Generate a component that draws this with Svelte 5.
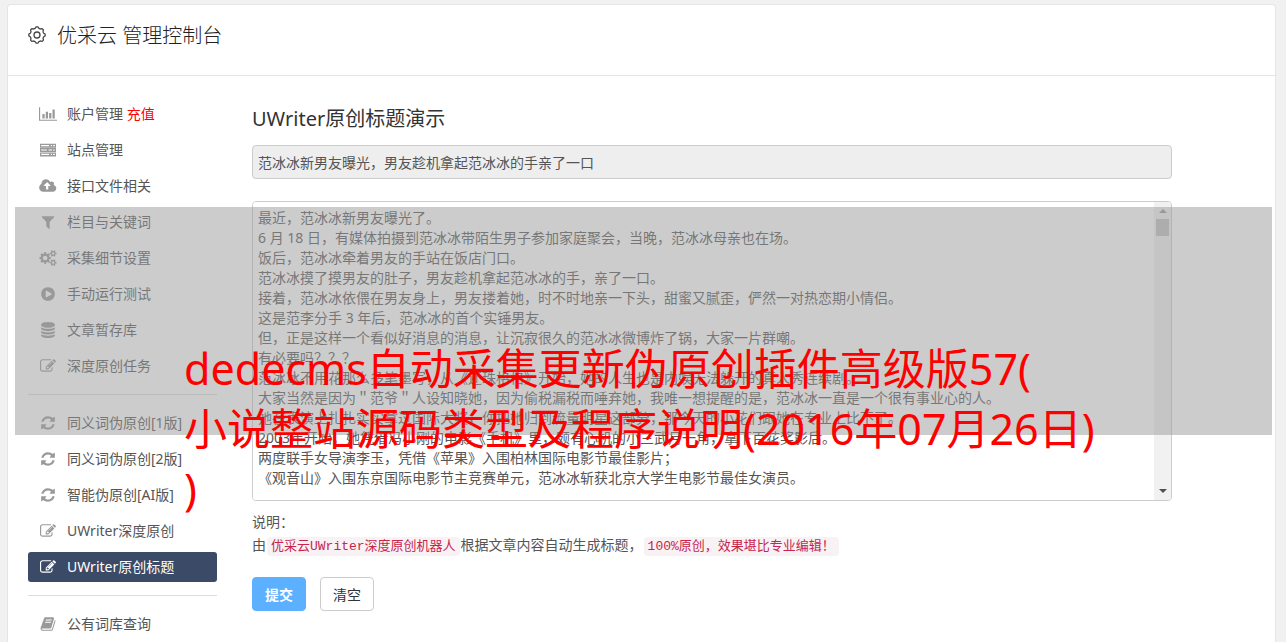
<script>
	const icons = {
		chart: {
			box: '0 0 2048 1792',
			d: 'M640 896v512h-256v-512h256zm384-256v768h-256v-768h256zm1024 896v128h-2048v-1536h128v1408h1920zm-640-768v640h-256v-640h256zm384-384v1024h-256v-1024h256z'
		},
		server: {
			box: '0 0 1792 1792',
			d: 'M0 190h1792v440h-1792zM120 340v130h904v-130zM1216 340v130h128v-130zM1472 340v130h192v-130zM0 680h1792v440h-1792zM120 830v130h648v-130zM960 830v130h384v-130zM1472 830v130h192v-130zM0 1170h1792v440h-1792zM120 1320v130h904v-130zM1216 1320v130h128v-130zM1472 1320v130h192v-130z'
		},
		upload: {
			box: '0 0 1856 1792',
			d: 'M1216 864q0-14-9-23l-352-352q-9-9-23-9t-23 9l-351 351q-10 12-10 24 0 14 9 23t23 9h224v352q0 13 9.500 22.500t22.500 9.500h192q13 0 22.500-9.500t9.500-22.500v-352h224q13 0 22.500-9.500t9.500-22.500zm640 288q0 159-112.500 271.500t-271.500 112.500h-1088q-185 0-316.500-131.500t-131.500-316.500q0-130 70-240t188-165q-2-30-2-43 0-212 150-362t362-150q156 0 285.500 87t188.500 231q71-62 166-62 106 0 181 75t75 181q0 76-41 138 130 31 213.500 135.500t83.500 238.500z'
		},
		filter: {
			box: '0 0 1792 1792',
			d: 'M1595 295q17 41-14 70l-493 493v742q0 42-39 59-13 5-25 5-27 0-45-19l-256-256q-19-19-19-45v-486l-493-493q-31-29-14-70 17-39 59-39h1280q42 0 59 39z'
		},
		cogs: {
			box: '0 0 1920 1792',
			d: 'M896 896q0-106-75-181t-181-75-181 75-75 181 75 181 181 75 181-75 75-181zm768 512q0-52-38-90t-90-38-90 38-38 90q0 53 37.500 90.500t90.500 37.500 90.500-37.500 37.500-90.500zm0-1024q0-52-38-90t-90-38-90 38-38 90q0 53 37.500 90.500t90.500 37.500 90.500-37.500 37.500-90.500zm-384 421v185q0 10-7 19.500t-16 10.500l-155 24q-11 35-32 76 34 48 90 115 7 11 7 20 0 12-7 19-23 30-82.500 89.500t-78.500 59.500q-11 0-21-7l-115-90q-37 19-77 31-11 108-23 155-7 24-30 24h-186q-11 0-20-7.500t-10-17.500l-23-153q-34-10-75-31l-118 89q-7 7-20 7-11 0-21-8-144-133-144-160 0-9 7-19 10-14 41-53t47-61q-23-44-35-82l-152-24q-10-1-17-9.500t-7-19.500v-185q0-10 7-19.500t16-10.500l155-24q11-35 32-76-34-48-90-115-7-11-7-20 0-12 7-20 22-30 82-89t79-59q11 0 21 7l115 90q34-18 77-32 11-108 23-154 7-24 30-24h186q11 0 20 7.500t10 17.500l23 153q34 10 75 31l118-89q8-7 20-7 11 0 21 8 144 133 144 160 0 8-7 19-12 16-42 54t-45 60q23 48 34 82l152 23q10 2 17 10.500t7 19.500zm640 533v140q0 16-149 31-12 27-30 52 51 113 51 138 0 4-4 7-122 71-124 71-8 0-46-47t-52-68q-20 2-30 2t-30-2q-14 21-52 68t-46 47q-2 0-124-71-4-3-4-7 0-25 51-138-18-25-30-52-149-15-149-31v-140q0-16 149-31 13-29 30-52-51-113-51-138 0-4 4-7 4-2 35-20t59-34 30-16q8 0 46 46.500t52 67.500q20-2 30-2t30 2q51-71 92-112l6-2q4 0 124 70 4 3 4 7 0 25-51 138 17 23 30 52 149 15 149 31zm0-1024v140q0 16-149 31-12 27-30 52 51 113 51 138 0 4-4 7-122 71-124 71-8 0-46-47t-52-68q-20 2-30 2t-30-2q-14 21-52 68t-46 47q-2 0-124-71-4-3-4-7 0-25 51-138-18-25-30-52-149-15-149-31v-140q0-16 149-31 13-29 30-52-51-113-51-138 0-4 4-7 4-2 35-20t59-34 30-16q8 0 46 46.500t52 67.500q20-2 30-2t30 2q51-71 92-112l6-2q4 0 124 70 4 3 4 7 0 25-51 138 17 23 30 52 149 15 149 31z'
		},
		play: {
			box: '0 0 1792 1792',
			d: 'M896 128q209 0 385.500 103t279.500 279.500 103 385.500-103 385.500-279.500 279.500-385.500 103-385.500-103-279.500-279.500-103-385.500 103-385.500 279.500-279.500 385.500-103zm384 823q32-18 32-55t-32-55l-544-320q-31-19-64-1-32 19-32 56v640q0 37 32 56 16 8 32 8 17 0 32-9z'
		},
		database: {
			box: '0 0 1792 1792',
			d: 'M896 768q237 0 443-43t325-127v170q0 69-103 128t-280 93.500-385 34.500-385-34.500-280-93.500-103-128v-170q119 84 325 127t443 43zm0 768q237 0 443-43t325-127v170q0 69-103 128t-280 93.500-385 34.500-385-34.500-280-93.500-103-128v-170q119 84 325 127t443 43zm0-384q237 0 443-43t325-127v170q0 69-103 128t-280 93.500-385 34.500-385-34.500-280-93.500-103-128v-170q119 84 325 127t443 43zm0-1152q208 0 385 34.500t280 93.500 103 128v128q0 69-103 128t-280 93.500-385 34.500-385-34.500-280-93.500-103-128v-128q0-69 103-128t280-93.500 385-34.500z'
		},
		edit: {
			box: '0 0 1792 1792',
			d: 'M888 1184l116-116-152-152-116 116v56h96v96h56zm440-720q-16-16-33 1l-350 350q-17 17-1 33t33-1l350-350q17-17 1-33zm80 594v190q0 119-84.500 203.500t-203.500 84.500h-832q-119 0-203.500-84.500t-84.500-203.500v-832q0-119 84.500-203.500t203.500-84.500h832q63 0 117 25 15 7 18 23 3 17-9 29l-49 49q-14 14-32 8-23-6-45-6h-832q-66 0-113 47t-47 113v832q0 66 47 113t113 47h832q66 0 113-47t47-113v-126q0-13 9-22l64-64q15-15 35-7t20 29zm-96-738l288 288-672 672h-288v-288zm444 132l-92 92-288-288 92-92q28-28 68-28t68 28l152 152q28 28 28 68t-28 68z'
		},
		refresh: {
			box: '0 0 1792 1792',
			d: 'M1639 1056q0 5-1 7-64 268-268 434.500t-478 166.500q-146 0-282.500-55t-243.500-157l-129 129q-19 19-45 19t-45-19-19-45v-448q0-26 19-45t45-19h448q26 0 45 19t19 45-19 45l-137 137q71 66 161 102t187 36q134 0 250-65t186-179q11-17 53-117 8-23 30-23h192q13 0 22.500 9.500t9.500 22.500zm25-800v448q0 26-19 45t-45 19h-448q-26 0-45-19t-19-45 19-45l138-138q-148-137-349-137-134 0-250 65t-186 179q-11 17-53 117-8 23-30 23h-199q-13 0-22.500-9.500t-9.500-22.500v-7q65-268 270-434.500t480-166.500q146 0 284 55.500t245 156.500l130-129q19-19 45-19t45 19 19 45z'
		},
		book: {
			box: '0 0 1792 1792',
			d: 'M1703 478q40 57 18 129l-275 906q-19 64-76.500 107.500t-122.500 43.500h-923q-77 0-148.500-53.500t-99.500-131.500q-24-67-2-127 0-4 3-27t4-37q1-8-3-21.500t-3-19.500q2-11 8-21t16.500-23.500 16.500-23.500q23-38 45-91.500t30-91.500q3-10 .5-30t-.5-28q3-11 17-28t17-23q21-36 42-92t25-90q1-9-2.500-32t.5-28q4-13 22-30.500t22-22.500q19-26 42.500-84.500t27.500-96.500q1-8-3-25.500t-2-26.500q2-8 9-18t18-23 17-21q8-12 16.500-30.500t15-35 16-36 19.500-32 26.500-23.500 36-11.500 47.500 5.500l-1 3q38-9 51-9h761q74 0 114 56t18 130l-274 906q-36 119-71.500 153.500t-128.500 34.500h-869q-27 0-38 15-11 16-1 43 24 70 144 70h923q29 0 56-15.500t35-41.500l300-987q7-22 5-57 38 15 59 43zm-1064 2q-4 13 2 22.500t20 9.500h608q13 0 25.500-9.500t16.500-22.500l21-64q4-13-2-22.500t-20-9.500h-608q-13 0-25.500 9.500t-16.500 22.500zm-83 256q-4 13 2 22.500t20 9.500h608q13 0 25.500-9.500t16.500-22.500l21-64q4-13-2-22.500t-20-9.500h-608q-13 0-25.500 9.500t-16.500 22.500z'
		}
	};

	const groups = [
		[
			{ icon: 'chart', label: '账户管理', extra: '充值' },
			{ icon: 'server', label: '站点管理' },
			{ icon: 'upload', label: '接口文件相关' },
			{ icon: 'filter', label: '栏目与关键词' },
			{ icon: 'cogs', label: '采集细节设置' },
			{ icon: 'play', label: '手动运行测试' },
			{ icon: 'database', label: '文章暂存库' },
			{ icon: 'edit', label: '深度原创任务' }
		],
		[
			{ icon: 'refresh', label: '同义词伪原创[1版]' },
			{ icon: 'refresh', label: '同义词伪原创[2版]' },
			{ icon: 'refresh', label: '智能伪原创[AI版]' },
			{ icon: 'edit', label: 'UWriter深度原创' },
			{ icon: 'edit', label: 'UWriter原创标题', active: true }
		],
		[{ icon: 'book', label: '公有词库查询' }]
	];

	const bannerLines = [
		'dedecms自动采集更新伪原创插件高级版57(',
		'小说整站源码类型及程序说明(2016年07月26日)',
		')'
	];

	const demoTitle = '范冰冰新男友曝光，男友趁机拿起范冰冰的手亲了一口';
	const demoText = [
		'最近，范冰冰新男友曝光了。',
		'6 月 18 日，有媒体拍摄到范冰冰带陌生男子参加家庭聚会，当晚，范冰冰母亲也在场。',
		'饭后，范冰冰牵着男友的手站在饭店门口。',
		'范冰冰摸了摸男友的肚子，男友趁机拿起范冰冰的手，亲了一口。',
		'接着，范冰冰依偎在男友身上，男友搂着她，时不时地亲一下头，甜蜜又腻歪，俨然一对热恋期小情侣。',
		'这是范李分手 3 年后，范冰冰的首个实锤男友。',
		'但，正是这样一个看似好消息的消息，让沉寂很久的范冰冰微博炸了锅，大家一片群嘲。',
		'有必要吗？？？',
		'范冰冰不用花那么多笔墨写，从《还珠格格》开始，她的人生也是内娱无法躲开的真人秀连续剧。',
		'大家当然是因为＂范爷＂人设知晓她，因为偷税漏税而唾弃她，我唯一想提醒的是，范冰冰一直是一个很有事业心的人。',
		'她在表演上扎扎实实拿过国际大奖，你把她归到流量明星这部分，那今天的小花们跟她在专业上比不了。',
		'2003年开始，她凭借冯小刚的电影《手机》里，颇有心机的小三武月一角，拿下百花奖影后。',
		'两度联手女导演李玉，凭借《苹果》入围柏林国际电影节最佳影片；',
		'《观音山》入围东京国际电影节主竞赛单元，范冰冰斩获北京大学生电影节最佳女演员。'
	].join('\n');

	let title = $state(demoTitle);
	let article = $state(demoText);

	// outline of the header gear: a circle with eight soft teeth
	function gearPath(cx, cy, r, depth) {
		let d = '';
		for (let i = 0; i < 96; i++) {
			const a = (i / 96) * Math.PI * 2;
			const rr = r + depth * Math.tanh(2 * Math.cos(8 * a));
			d += `${i ? 'L' : 'M'}${(cx + rr * Math.cos(a)).toFixed(2)} ${(cy + rr * Math.sin(a)).toFixed(2)}`;
		}
		return d + 'Z';
	}

	function clearAll() {
		article = '';
		title = '';
	}
</script>

<div class="panel">
	<header class="panel-header">
		<svg class="gear" viewBox="0 0 18 18" aria-hidden="true">
			<path d={gearPath(9, 9, 7.5, 0.7)} />
			<circle cx="9" cy="9" r="3" />
		</svg>
		<h1>优采云 管理控制台</h1>
	</header>

	<div class="panel-body">
		<nav class="sidebar">
			{#each groups as group}
				<ul>
					{#each group as item}
						<li>
							<a href="#top" class:active={item.active}>
								<svg class="icon" viewBox={icons[item.icon].box} aria-hidden="true">
									<path fill-rule="evenodd" d={icons[item.icon].d} />
								</svg>
								<span>{item.label}{#if item.extra}&nbsp;<b>{item.extra}</b>{/if}</span>
							</a>
						</li>
					{/each}
				</ul>
			{/each}
		</nav>

		<main class="content">
			<h2>UWriter原创标题演示</h2>
			<input class="title-input" type="text" aria-label="标题" readonly bind:value={title} />
			<div class="editor">
				<textarea aria-label="文章内容" bind:value={article}></textarea>
				<div class="scrollbar" aria-hidden="true">
					<span class="arrow up"></span>
					<span class="thumb"></span>
					<span class="arrow down"></span>
				</div>
			</div>
			<div class="note">
				<p>说明：</p>
				<p>由<code>优采云UWriter深度原创机器人</code>根据文章内容自动生成标题，<code>100%原创，效果堪比专业编辑！</code></p>
			</div>
			<div class="actions">
				<button class="btn primary" type="button">提交</button>
				<button class="btn" type="button" onclick={clearAll}>清空</button>
			</div>
		</main>
	</div>
</div>

<div class="banner">
	<p>
		{#each bannerLines as line}
			<span>{line}</span>
		{/each}
	</p>
</div>

<style>
	:global(body) {
		background: #f1f1f1;
		font-family: 'Noto Sans', 'Noto Sans CJK SC', sans-serif;
		font-size: 14px;
		color: #555;
	}

	.panel {
		box-sizing: border-box;
		min-height: calc(100vh - 4px);
		margin: 4px 10px 0 7px;
		background: #fff;
		border: 1px solid #e5e5e5;
		border-bottom: none;
		border-radius: 4px 4px 0 0;
	}

	.panel-header {
		display: flex;
		align-items: flex-start;
		gap: 11px;
		height: 53px;
		padding: 17px 20px 0;
		border-bottom: 1px solid #e5e5e5;
	}

	.gear {
		width: 18px;
		height: 18px;
		margin-top: 4px;
		fill: none;
		stroke: #444;
		stroke-width: 1.3;
	}

	h1,
	h2 {
		margin: 0;
		font-size: 20px;
		font-weight: 400;
		line-height: 28px;
		color: #333;
	}

	h1 {
		font-weight: 300;
		color: #222;
	}

	.panel-body {
		display: flex;
		gap: 35px;
		padding: 23px 20px 0;
	}

	.sidebar {
		flex: none;
		width: 189px;
	}

	.sidebar ul {
		display: flex;
		flex-direction: column;
		gap: 6px;
		margin: 0;
		padding: 0;
		list-style: none;
	}

	.sidebar ul + ul {
		margin-top: 13px;
		padding-top: 13px;
		border-top: 1px solid #ddd;
	}

	.sidebar a {
		display: flex;
		align-items: center;
		gap: 10px;
		height: 30px;
		padding-left: 11px;
		border-radius: 3px;
		color: #555;
		line-height: 30px;
		text-decoration: none;
		white-space: nowrap;
	}

	.sidebar a.active {
		background: #3b4a66;
		color: #fff;
	}

	.sidebar b {
		font-weight: 400;
		color: #f00;
	}

	.icon {
		width: 18px;
		height: 16px;
		fill: #999;
	}

	.active .icon {
		fill: #fff;
	}

	.content {
		flex: 1;
		min-width: 0;
		max-width: 920px;
		padding-top: 6px;
	}

	.title-input {
		display: block;
		box-sizing: border-box;
		width: 100%;
		height: 34px;
		margin-top: 12px;
		padding: 0 5px;
		border: 1px solid #ccc;
		border-radius: 4px;
		background: #eee;
		color: #555;
		font: inherit;
	}

	.editor {
		display: flex;
		box-sizing: border-box;
		height: 300px;
		margin-top: 22px;
		border: 1px solid #ccc;
		border-radius: 4px;
		overflow: hidden;
	}

	textarea {
		flex: 1;
		min-width: 0;
		padding: 6px 5px;
		border: none;
		outline: none;
		resize: none;
		background: #fff;
		color: #555;
		font: inherit;
		line-height: 20px;
	}

	.scrollbar {
		display: flex;
		flex-direction: column;
		align-items: center;
		width: 17px;
		background: #f1f1f1;
	}

	.arrow {
		border: 4px solid transparent;
	}

	.arrow.up {
		margin-top: 7px;
		border-top: none;
		border-bottom-color: #999;
	}

	.arrow.down {
		margin: auto 0 7px;
		border-bottom: none;
		border-top-color: #505050;
	}

	.thumb {
		width: 13px;
		height: 17px;
		margin-top: 6px;
		background: #c1c1c1;
	}

	.note {
		margin-top: 9px;
		line-height: 23px;
	}

	.note p {
		margin: 0;
	}

	code {
		margin: 0 1px;
		padding: 2px 4px;
		border-radius: 4px;
		background: #f9f2f4;
		color: #c7254e;
		font-family: 'Liberation Mono', 'Noto Sans CJK SC', monospace;
		font-size: 13px;
		line-height: 16px;
	}

	.actions {
		display: flex;
		gap: 14px;
		margin-top: 21px;
	}

	.btn {
		height: 34px;
		padding: 0 12px;
		border: 1px solid #ccc;
		border-radius: 4px;
		background: #fff;
		color: #333;
		font: inherit;
		cursor: pointer;
	}

	.btn.primary {
		border-color: #5bb0ff;
		background: #5bb0ff;
		color: #fff;
		font-weight: 700;
	}

	/* translucent strip laid over the page, with the caption running past its lower edge */
	.banner {
		position: absolute;
		top: 207px;
		right: 14px;
		left: 15px;
		height: 228px;
		background: rgba(153, 153, 153, 0.5);
		pointer-events: none;
	}

	.banner p {
		margin: 0;
		padding: 132px 0 0 169px;
		color: #f00;
		font-size: 43px;
		line-height: 60px;
		white-space: nowrap;
	}

	.banner span {
		display: block;
	}
</style>
